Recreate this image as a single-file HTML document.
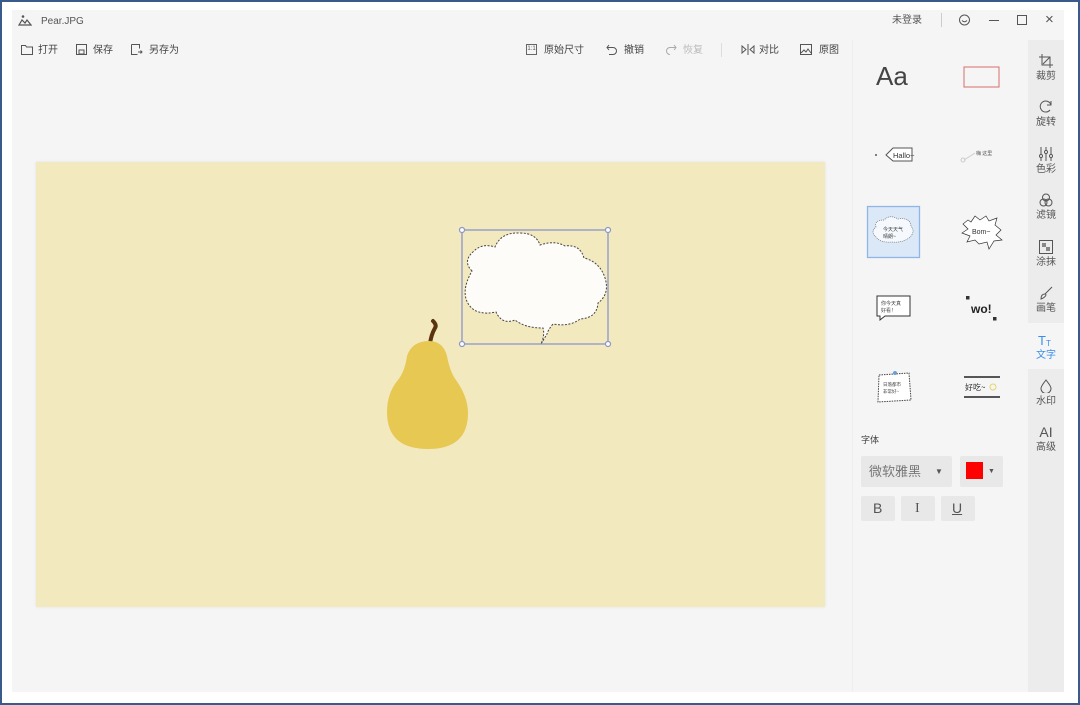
<!DOCTYPE html>
<html><head><meta charset="utf-8"><style>
*{margin:0;padding:0;box-sizing:border-box}
body{width:1080px;height:705px;background:#3a5a8c;font-family:"Liberation Sans","Noto Sans CJK SC",sans-serif;overflow:hidden;position:relative}
.win{position:absolute;left:2px;top:2px;width:1076px;height:701px;background:#fff}
.main{position:absolute;left:12px;top:10px;width:1052px;height:682px;background:#f5f5f5}
.t{position:absolute;font-size:10px;line-height:12px;color:#444;white-space:nowrap}
.side{position:absolute;left:1028px;top:40px;width:36px;height:652px;background:#ececec}
.si{position:absolute;left:1028px;width:36px;text-align:center;font-size:10px;line-height:12px;color:#555}
.si svg{display:block;margin:0 auto 3px}
.btn{position:absolute;background:#e8e8e8;border-radius:2px}
</style></head><body>
<div class="win"></div>
<div class="main"></div>
<svg style="position:absolute;left:18px;top:14px" width="14" height="12" viewBox="0 0 14 12"><path d="M1 11 L4 6 L7 9 L9 6 L13 11 Z" fill="none" stroke="#555" stroke-width="1.2"/><circle cx="5" cy="2.5" r="1.3" fill="#555"/></svg>
<div class="t" style="left:41px;top:16px;color:#555">Pear.JPG</div>
<div class="t" style="left:892px;top:15px;color:#555">未登录</div>
<div style="position:absolute;left:941px;top:13px;width:1px;height:14px;background:#ccc"></div>
<svg style="position:absolute;left:958px;top:14px" width="13" height="13" viewBox="0 0 13 13"><circle cx="6.5" cy="6" r="5" fill="none" stroke="#555"/><path d="M4 6.5 Q6.5 9 9 6.5" fill="none" stroke="#555"/></svg>
<div style="position:absolute;left:989px;top:20px;width:10px;height:1px;background:#555"></div>
<div style="position:absolute;left:1017px;top:15px;width:10px;height:10px;border:1px solid #555"></div>
<div class="t" style="left:1045px;top:12px;font-size:15px;line-height:15px;color:#555">×</div>
<svg style="position:absolute;left:21px;top:44px" width="12" height="11"><path d="M0.5 1.5h4l1 1.5h6v7.5h-11z" fill="none" stroke="#555"/></svg>
<div class="t" style="left:38px;top:45px">打开</div>
<svg style="position:absolute;left:76px;top:44px" width="11" height="11"><rect x=".5" y=".5" width="10" height="10" fill="none" stroke="#555"/><rect x="3" y="6" width="5" height="4" fill="none" stroke="#555"/></svg>
<div class="t" style="left:93px;top:45px">保存</div>
<svg style="position:absolute;left:131px;top:44px" width="12" height="11"><path d="M.5 .5h8v4M.5 .5v10h6" fill="none" stroke="#555"/><path d="M7 8h4M9.5 6.5l1.5 1.5-1.5 1.5" fill="none" stroke="#555"/></svg>
<div class="t" style="left:149px;top:45px">另存为</div>
<div style="position:absolute;left:526px;top:44px;width:11px;height:11px;border:1px solid #666;font-size:6px;text-align:center;line-height:9px;color:#555">1:1</div>
<div class="t" style="left:544px;top:45px">原始尺寸</div>
<svg style="position:absolute;left:606px;top:44px" width="12" height="11"><path d="M3 1 L1 3.5 L3 6 M1 3.5h6a3.5 3.5 0 0 1 0 7h-4" fill="none" stroke="#555"/></svg>
<div class="t" style="left:624px;top:45px">撤销</div>
<svg style="position:absolute;left:665px;top:44px" width="12" height="11"><path d="M9 1 L11 3.5 L9 6 M11 3.5h-6a3.5 3.5 0 0 0 0 7" fill="none" stroke="#aaa"/></svg>
<div class="t" style="left:683px;top:45px;color:#bbb">恢复</div>
<div style="position:absolute;left:721px;top:43px;width:1px;height:14px;background:#ddd"></div>
<svg style="position:absolute;left:741px;top:44px" width="14" height="11"><path d="M7 0v11M1 2v7l4-3.5zM13 2v7l-4-3.5z" fill="none" stroke="#555"/></svg>
<div class="t" style="left:759px;top:45px">对比</div>
<svg style="position:absolute;left:800px;top:44px" width="12" height="11"><rect x=".5" y=".5" width="11" height="10" fill="none" stroke="#555"/><path d="M1 9l3-3 2 2 2-3 3 4" fill="none" stroke="#555"/></svg>
<div class="t" style="left:819px;top:45px">原图</div>
<div style="position:absolute;left:852px;top:40px;width:176px;height:652px;background:#f5f5f5;border-left:1px solid #eee"></div>
<div style="position:absolute;left:36px;top:162px;width:789px;height:445px;background:#f3e9bf;box-shadow:0 0 3px rgba(0,0,0,.08)"></div>
<svg style="position:absolute;left:0;top:0" width="1080" height="705">
<path d="M433 321 Q437 325 435 328 Q431 335 430 344" stroke="#5a3410" stroke-width="4" fill="none" stroke-linecap="round"/>
<path d="M429 341 Q443 341 447 356 Q450 372 456 380 Q468 397 468 413 Q468 449 428 449 Q387 449 387 412 Q387 393 398 380 Q405 371 407 356 Q412 341 429 341 Z" fill="#e7c853"/>
<path d="M472 271 Q462 261 474 251 Q482 243 495 247 Q501 232 520 233 Q536 233 540 245 Q555 240 565 246 Q580 244 584 258 Q600 262 605 278 Q610 294 598 303 Q597 318 580 319 Q570 327 553 324 Q548 330 547 334 L541 344 Q545 335 543 328 Q525 328 515 320 Q502 325 496 312 Q477 316 469 305 Q460 292 472 271 Z" fill="#fdfcf9" stroke="#444" stroke-width="1" stroke-dasharray="2 1.5"/>
<rect x="462" y="230" width="146" height="114" fill="none" stroke="#8b96c8" stroke-width="1.3"/>
<g fill="#fff" stroke="#8b96c8" stroke-width="1.2"><circle cx="462" cy="230" r="2.5"/><circle cx="608" cy="230" r="2.5"/><circle cx="462" cy="344" r="2.5"/><circle cx="608" cy="344" r="2.5"/></g>
<rect x="964" y="67" width="35" height="20" fill="none" stroke="#d86d6d" stroke-width="1"/>
<path d="M886 155 L893 148 H912 V161 H893 Z" fill="#fff" stroke="#555"/><circle cx="876" cy="155" r="1" fill="#555"/>
<text x="893" y="158" font-size="7.5" fill="#333" font-family="Liberation Sans">Hallo~</text>
<path d="M964 160 L975 153" stroke="#ccc"/><circle cx="963" cy="160" r="2" fill="none" stroke="#ccc"/>
<text x="976" y="155" font-size="5" fill="#555" font-family="Noto Sans CJK SC">嗨 这里</text>
<rect x="867.5" y="206.5" width="52" height="51" fill="#dbe8f7" stroke="#8fb6e6" stroke-width="1.3"/>
<path d="M876 227 Q874 220 884 220 Q890 214 898 219 Q910 217 911 226 Q916 232 909 238 Q902 243 892 242 Q880 243 876 237 Q870 232 876 227 Z" fill="#f5f8fc" stroke="#555" stroke-width=".6" stroke-dasharray="1 1"/>
<text x="883" y="231" font-size="5" fill="#444" font-family="Noto Sans CJK SC">今天天气</text><text x="883" y="238" font-size="5" fill="#444" font-family="Noto Sans CJK SC">晴朗~</text>
<path d="M963 224 L968 220 L971 222 L975 216 L980 220 L986 216 L989 221 L997 218 L995 225 L1001 230 L996 235 L1002 240 L994 241 L989 249 L987 242 L979 244 L975 240 L967 242 L970 236 L962 233 L968 229 Z" fill="#fff" stroke="#333" stroke-width=".7"/>
<text x="972" y="234" font-size="7" fill="#333" font-family="Liberation Sans">Bom~</text>
<path d="M877 296 H910 V316 H885 L880 320 V316 H877 Z" fill="#fff" stroke="#333"/>
<text x="881" y="305" font-size="5" fill="#444" font-family="Noto Sans CJK SC">你今天真</text><text x="881" y="312" font-size="5" fill="#444" font-family="Noto Sans CJK SC">好看！</text>
<rect x="966" y="296" width="3.5" height="3.5" fill="#333"/><rect x="993" y="317" width="3.5" height="3.5" fill="#333"/>
<text x="971" y="313" font-size="12" font-weight="bold" fill="#222" font-family="Liberation Sans">wo!</text>
<path d="M879 375 L909 373 L911 400 L878 402 Z" fill="#fff" stroke="#444" stroke-dasharray="1.5 1"/><circle cx="895" cy="373" r="2" fill="#6aa0d8"/>
<text x="883" y="386" font-size="4.5" fill="#444" font-family="Noto Sans CJK SC">日落都市</text><text x="883" y="393" font-size="4.5" fill="#444" font-family="Noto Sans CJK SC">非常好~</text>
<path d="M964 377 H1000 M964 397 H1000" stroke="#222" stroke-width="1.5"/>
<text x="965" y="390" font-size="8" fill="#333" font-family="Noto Sans CJK SC">好吃~</text><circle cx="993" cy="387" r="3" fill="none" stroke="#e6d46a"/>
</svg>
<div class="t" style="left:876px;top:62px;font-size:26px;line-height:28px;color:#444">Aa</div>
<div class="t" style="left:861px;top:434px;font-size:9px">字体</div>
<div class="btn" style="left:861px;top:456px;width:91px;height:31px"></div>
<div class="t" style="left:869px;top:464px;font-size:13px;line-height:15px;color:#777">微软雅黑</div>
<div class="t" style="left:935px;top:466px;font-size:8px;color:#555">▼</div>
<div class="btn" style="left:960px;top:456px;width:43px;height:31px"></div>
<div style="position:absolute;left:966px;top:462px;width:17px;height:17px;background:#f00"></div>
<div class="t" style="left:988px;top:466px;font-size:7px;color:#555">▼</div>
<div class="btn" style="left:861px;top:496px;width:34px;height:25px"></div>
<div class="btn" style="left:901px;top:496px;width:34px;height:25px"></div>
<div class="btn" style="left:941px;top:496px;width:34px;height:25px"></div>
<div class="t" style="left:873px;top:501px;font-size:14px;line-height:15px;color:#555">B</div>
<div class="t" style="left:915px;top:501px;font-size:14px;line-height:15px;color:#555;font-family:'Liberation Serif'">I</div>
<div class="t" style="left:952px;top:501px;font-size:14px;line-height:15px;color:#555;text-decoration:underline">U</div>
<div class="side"></div>
<div style="position:absolute;left:1028px;top:323px;width:36px;height:46px;background:#f5f5f5"></div>
<div class="si" style="top:54px"><svg width="14" height="14"><path d="M3 0v11h11M0 3h11v11M4 10l7-7" fill="none" stroke="#555"/></svg>裁剪</div>
<div class="si" style="top:100px"><svg width="14" height="14"><path d="M11 10A5.5 5.5 0 1 1 12 5M12 1v4h-4" fill="none" stroke="#555"/></svg>旋转</div>
<div class="si" style="top:147px"><svg width="14" height="14"><path d="M2 0v14M7 0v14M12 0v14" stroke="#555"/><circle cx="2" cy="9" r="1.5" fill="#fff" stroke="#555"/><circle cx="7" cy="5" r="1.5" fill="#fff" stroke="#555"/><circle cx="12" cy="9" r="1.5" fill="#fff" stroke="#555"/></svg>色彩</div>
<div class="si" style="top:193px"><svg width="14" height="14"><circle cx="7" cy="4.5" r="3.5" fill="none" stroke="#555"/><circle cx="4.5" cy="9.5" r="3.5" fill="none" stroke="#555"/><circle cx="9.5" cy="9.5" r="3.5" fill="none" stroke="#555"/></svg>滤镜</div>
<div class="si" style="top:240px"><svg width="14" height="14"><rect x=".5" y=".5" width="13" height="13" fill="none" stroke="#555"/><rect x="3" y="3" width="4" height="4" fill="#888"/><rect x="7" y="7" width="4" height="4" fill="#888"/></svg>涂抹</div>
<div class="si" style="top:286px"><svg width="14" height="14"><path d="M13 1L6 8M2 13c0-4 2-5 4-5s1 3-4 5z" fill="none" stroke="#555"/></svg>画笔</div>
<div class="si" style="top:333px;color:#3b8ee8"><svg width="16" height="14"><text x="0" y="12" font-size="13" fill="#3b8ee8" font-family="Liberation Sans">T</text><text x="8" y="13" font-size="8" fill="#3b8ee8" font-family="Liberation Sans">T</text></svg>文字</div>
<div class="si" style="top:379px"><svg width="14" height="14"><path d="M7 1C4 5 2 7 2 9.5a5 5 0 0 0 10 0C12 7 10 5 7 1z" fill="none" stroke="#555"/></svg>水印</div>
<div class="si" style="top:425px"><div style="font-size:14px;line-height:15px;color:#555;margin-bottom:2px">AI</div>高级</div>
</body></html>
